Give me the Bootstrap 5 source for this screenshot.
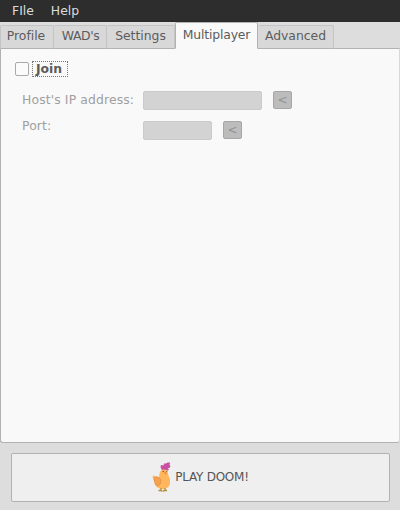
<!DOCTYPE html>
<html lang="en">
<head>
<meta charset="utf-8">
<meta name="viewport" content="width=device-width, initial-scale=1">
<title>Doom launcher</title>
<link href="https://cdn.jsdelivr.net/npm/bootstrap@5.3.0/dist/css/bootstrap.min.css" rel="stylesheet">
<style>
body{font-family:"DejaVu Sans",sans-serif;font-size:12.4px;line-height:16px;color:#5c5c5c;background:#ddd;height:510px;overflow:hidden}
.menubar{height:22px;background:#2d2d2d;padding:0 12px;gap:17px}
.menubar .nav-link{color:#dcdcdc;padding:3px 0}
.launcher-tabs{height:27px;border:0;flex-wrap:nowrap;position:relative;z-index:1}
.launcher-tabs .nav-link,.launcher-tabs .nav-link:hover{margin:0;padding:0 0 2px;height:24px;border:1px solid #c4c4c4;border-bottom-color:#b2b2b2;border-radius:2px 2px 0 0;background:#d8d8d8;color:#5c5c5c;text-align:center;white-space:nowrap;letter-spacing:-.02px}
.launcher-tabs .nav-link.active{height:27px;padding:0 0 1px;background:#f9f9f9;border-color:#b2b2b2;border-bottom-color:#f9f9f9;color:#5c5c5c;letter-spacing:-.15px}
.launcher-tabs .joined{border-left:0!important}
.t1{width:54px}.t2{width:53px}.t3{width:68px}.t4{width:83px}.t5{width:76px}
.launcher-tabs .t1{padding-right:2px}
.launcher-tabs .t2,.launcher-tabs .t2:hover{padding-left:1px;letter-spacing:-.4px}
.page-pane{height:395px;margin-top:-1px;background:#f9f9f9;border:1px solid #b2b2b2;border-right-color:#d8d8d8;border-radius:0 0 3px 3px;padding:12px 14px}
.join-check .form-check-input{width:14px;height:14px;margin:0 3px 0 0;float:none;border:1px solid #aaa;border-radius:2px;background:#fbfbfb}
.join-check label{font-weight:700;width:36px;height:16px;line-height:13px;border:1px dotted #777;padding-left:3px}
.fields{margin:14px 0 0 7px;display:grid;grid-template-columns:121px auto;row-gap:11px;color:#a0a0a0}
.fields label{line-height:17px;letter-spacing:.12px}
.fields .port-label{line-height:10px}
.fields .form-control{height:19px;min-height:0;padding:0 4px;background:#d3d3d3;border:1px solid #cacaca;border-radius:2px}
.ip{width:119px}.port{width:69px}
.fields .btn{width:19px;height:18px;margin-left:11px;padding:0;font-size:12px;line-height:15px;color:#929292;background:#bcbcbc;border:1px solid #a6a6a6;border-radius:2px;opacity:1}
.play{margin:10px 10px 0 11px;height:49px;background:#efefef;border:1px solid #b2b2b2;border-radius:2px;padding:0;font-size:12px;letter-spacing:-.25px;color:#555}
.play:hover{background:#efefef;border-color:#b2b2b2;color:#555}
.play svg{width:20px;height:30px;margin:0 3px 2px 0}
.play span{padding-bottom:2px}
</style>
<script src="https://cdn.jsdelivr.net/npm/bootstrap@5.3.0/dist/js/bootstrap.bundle.min.js"></script>
</head>
<body class="d-flex flex-column">
<nav class="menubar nav flex-shrink-0"><a class="nav-link">FIle</a><a class="nav-link">Help</a></nav>
<div class="launcher-tabs nav nav-tabs d-flex align-items-end flex-shrink-0">
<button class="nav-link t1">Profile</button>
<button class="nav-link joined t2">WAD's</button>
<button class="nav-link joined t3">Settings</button>
<button class="nav-link active t4">Multiplayer</button>
<button class="nav-link joined t5">Advanced</button>
</div>
<main class="page-pane flex-shrink-0">
<div class="join-check d-flex align-items-center"><input class="form-check-input" type="checkbox" id="join"><label for="join">Join</label></div>
<div class="fields">
<label for="ip">Host's IP address:</label>
<div class="d-flex"><input class="form-control ip" id="ip" disabled><button class="btn" disabled>&lt;</button></div>
<label class="port-label" for="port">Port:</label>
<div class="d-flex"><input class="form-control port" id="port" disabled><button class="btn" disabled>&lt;</button></div>
</div>
</main>
<button class="btn play d-flex align-items-center justify-content-center">
<svg viewBox="0 0 20 30" aria-hidden="true">
<path d="M10 8.500L8.500 5 9 3 11.500 3.500 12 1.500 14 1.500 15.500.5 18 .5 17.500 3 18.500 4 17.500 6 15.500 6 17 7.500 16 8.500z" fill="#c94fa0"/>
<path d="M7.500 12Q8 7.500 12 7.500Q16 7.500 16 12L18 18Q19 26 12 27Q6 27.500 3 23L2 18L.5 15Q.5 13 4 14L7 15z" fill="#ffb65c"/>
<path d="M2 16Q7 14 9 18Q9 23 6 24Q3 23 2 18z" fill="#f6a34f" stroke="#dd8e4b" stroke-width=".7"/>
<path d="M12.500 10l2.200 1-1.700 1.500z" fill="#d87935"/><circle cx="11.300" cy="9.500" r=".7" fill="#715035"/><circle cx="14.700" cy="9.500" r=".6" fill="#715035"/>
<path d="M9 26v2.500l-2.500 0m2.500 0l1.500 1M13 26v2.500l-2 .5m2-.5l2 0" fill="none" stroke="#b48b32" stroke-width="1.300"/>
</svg><span>PLAY DOOM!</span></button>
</body>
</html>
